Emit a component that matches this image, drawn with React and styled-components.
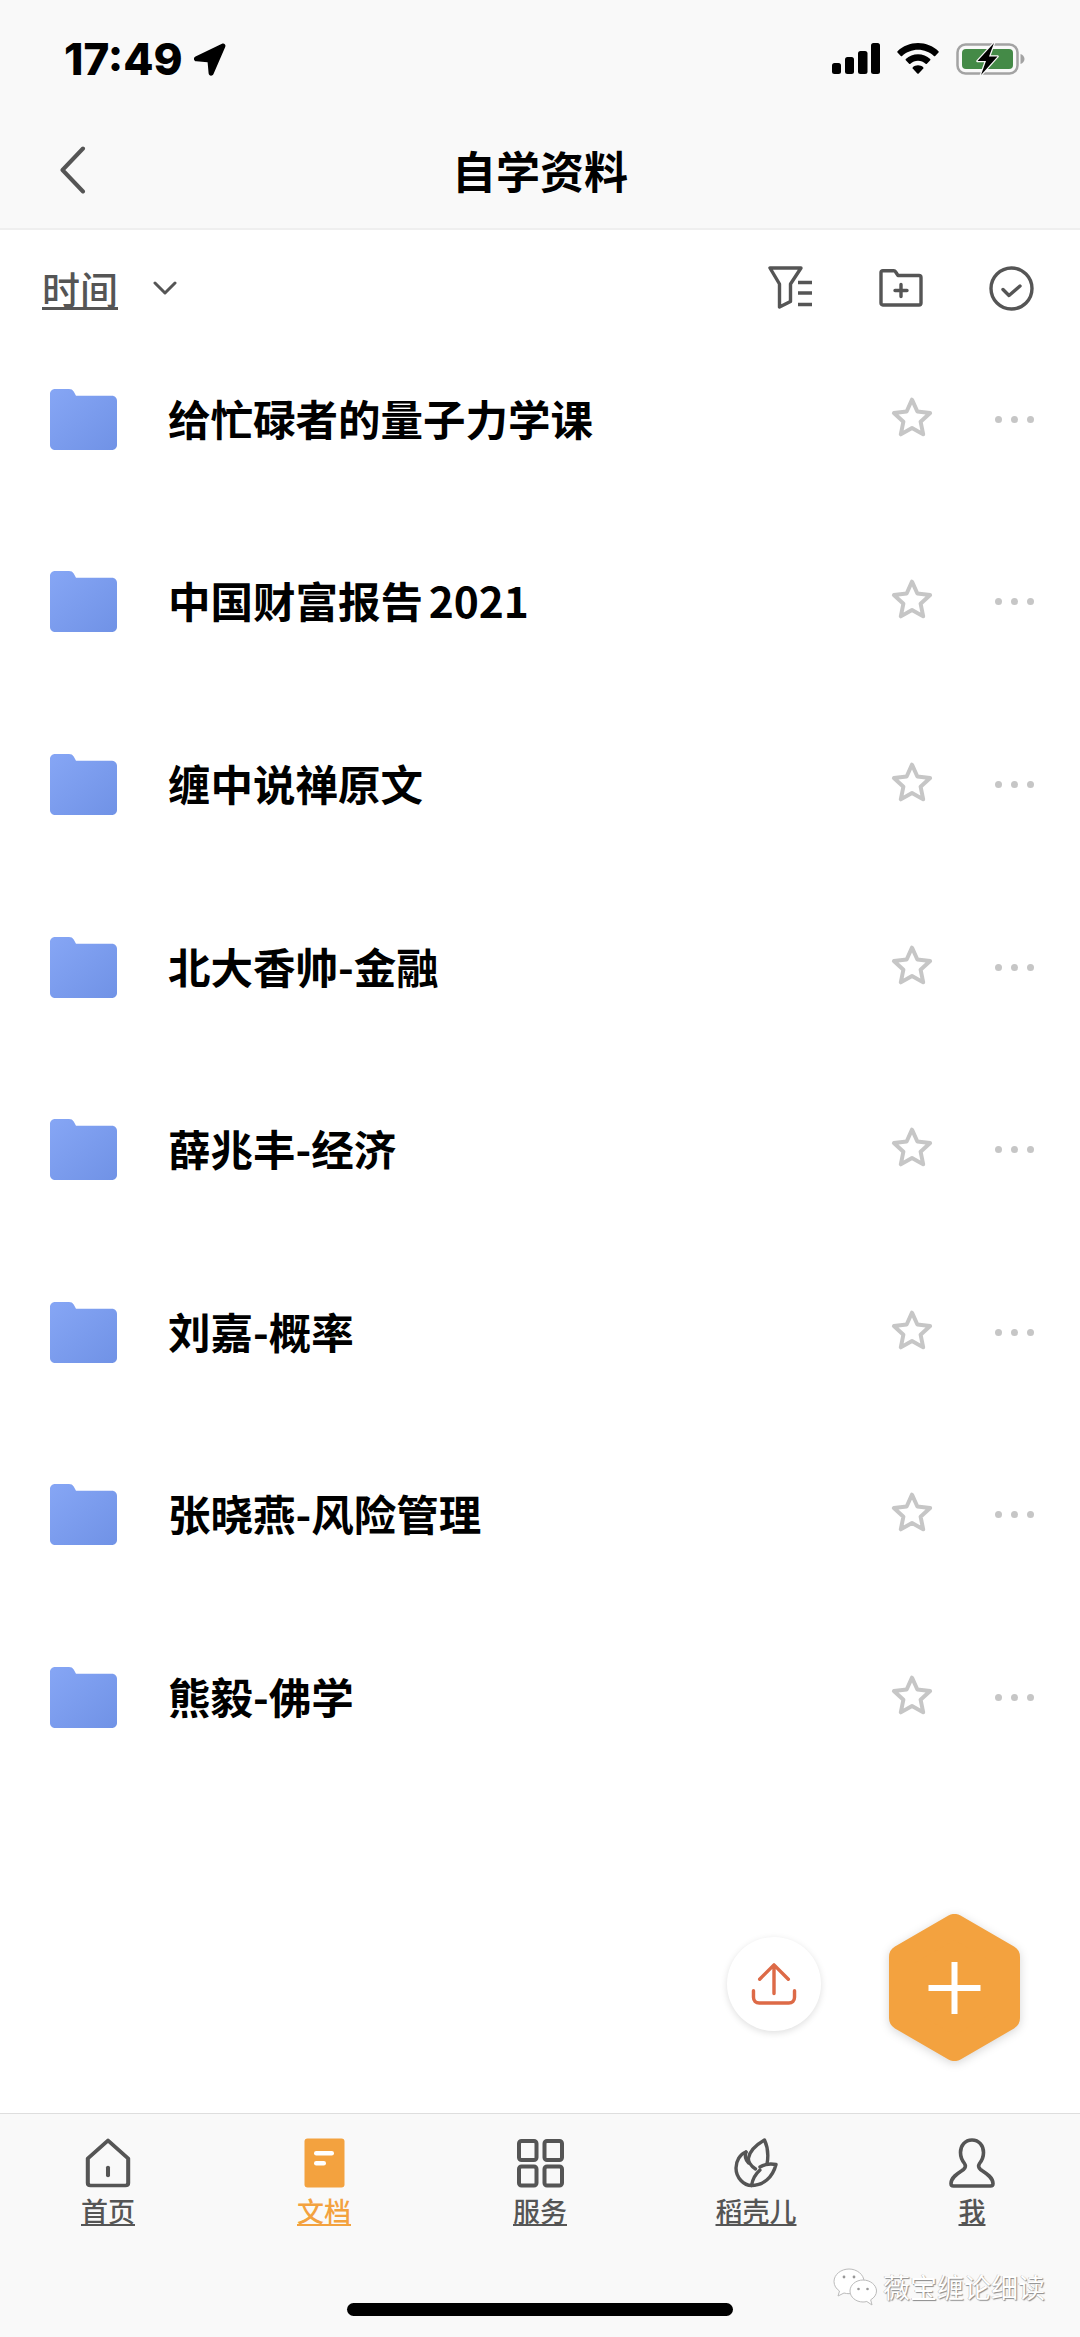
import React from "react";
import styled, { createGlobalStyle } from "styled-components";

const GlobalStyle = createGlobalStyle`
  html, body { margin: 0; padding: 0; background: #fff; }
  body { font-family: "Noto Sans CJK SC", "Noto Sans", sans-serif; }
`;

const Page = styled.div`
  position: relative;
  width: 1080px;
  height: 2337px;
  display: flex;
  flex-direction: column;
  overflow: hidden;
  background: #fff;
`;
const Header = styled.header`
  height: 228px;
  background: #f9f9f9;
  border-bottom: 2px solid #efefef;
  display: flex;
  flex-direction: column;
`;
const StatusBar = styled.div`
  height: 118px;
  display: flex;
  align-items: flex-start;
  padding: 43px 54px 0 64px;
  box-sizing: border-box;
`;
const Time = styled.span`
  font-family: Inter, "Liberation Sans", sans-serif;
  font-weight: 800;
  font-size: 44px;
  line-height: 33px;
  letter-spacing: 0;
  color: #000;
`;
const LocationIcon = styled.svg`
  margin-left: 9px;
`;
const StatusIcons = styled.div`
  margin-left: auto;
  display: flex;
  gap: 17px;
`;
const NavBar = styled.div`
  flex: 1;
  display: flex;
  align-items: center;
  position: relative;
  padding: 0 0 6px 60px;
`;
const NavTitle = styled.h1`
  flex: 1;
  margin: 0 0 0 -26px;
  padding-right: 60px;
  text-align: center;
  font-size: 44px;
  line-height: 60px;
  font-weight: 700;
  color: #000;
`;
const Toolbar = styled.div`
  height: 98px;
  display: flex;
  align-items: center;
  padding: 18px 46px 0 42px;
  box-sizing: border-box;
`;
const SortLabel = styled.span`
  font-size: 38px;
  line-height: 50px;
  font-weight: 500;
  color: #555;
  text-decoration: underline;
  text-decoration-thickness: 3px;
  text-underline-offset: 3px;
`;
const SortArrow = styled.svg`
  margin-left: 35px;
`;
const ToolIcons = styled.div`
  margin-left: auto;
  display: flex;
  align-items: center;
  gap: 66px;
`;
const FileList = styled.ul`
  list-style: none;
  margin: 0;
  padding: 0;
`;
const FileRow = styled.li`
  height: 182.6px;
  display: flex;
  align-items: center;
  padding: 0 46px 0 50px;
  box-sizing: border-box;
`;
const FileName = styled.span`
  margin: -3px 0 0 51px;
  font-size: 42.5px;
  line-height: 60px;
  font-weight: 700;
  word-spacing: -4px;
  color: #000;
`;
const StarIcon = styled.svg`
  margin-left: auto;
  margin-top: -4px;
`;
const MoreDots = styled.div`
  margin-left: 61px;
  display: flex;
  gap: 9px;
`;
const Dot = styled.i`
  width: 7px;
  height: 7px;
  border-radius: 50%;
  background: #c6c6c6;
`;
const UploadButton = styled.div`
  position: absolute;
  left: 727px;
  top: 1937px;
  width: 94px;
  height: 94px;
  border-radius: 50%;
  background: #fff;
  box-shadow: 0 2px 7px rgba(0, 0, 0, 0.13);
  display: flex;
  align-items: center;
  justify-content: center;
`;
const AddButton = styled.svg`
  position: absolute;
  left: 889px;
  top: 1914px;
  overflow: visible;
  filter: drop-shadow(0 2px 5px rgba(0, 0, 0, 0.16));
`;
const TabBar = styled.nav`
  margin-top: auto;
  height: 224px;
  background: #f9f9f9;
  border-top: 1px solid #dedede;
  padding-top: 24px;
  box-sizing: border-box;
  display: grid;
  grid-template-columns: repeat(5, 1fr);
  align-items: start;
`;
const Tab = styled.div`
  display: flex;
  flex-direction: column;
  align-items: center;
  white-space: nowrap;
`;
const TabIconBox = styled.div`
  height: 50px;
  display: flex;
  align-items: center;
  justify-content: center;
`;
const TabLabel = styled.span`
  margin-top: 4px;
  font-size: 27px;
  line-height: 38px;
  font-weight: 500;
  color: ${(p) => (p.$active ? "#f3a23f" : "#555")};
  text-decoration: underline;
  text-decoration-thickness: 2px;
  text-underline-offset: 2px;
`;
const HomeIndicator = styled.div`
  position: absolute;
  left: 347px;
  top: 2303px;
  width: 386px;
  height: 13px;
  border-radius: 7px;
  background: #000;
`;
const Watermark = styled.div`
  position: absolute;
  left: 833px;
  top: 2267px;
  display: flex;
  align-items: center;
  gap: 6px;
`;
const WatermarkText = styled.span`
  font-size: 27px;
  line-height: 40px;
  color: #fff;
  text-shadow: 1px 1px 1px #8a8a8a, -0.5px -0.5px 0.5px #b5b5b5;
`;

const files = [
  "给忙碌者的量子力学课",
  "中国财富报告 2021",
  "缠中说禅原文",
  "北大香帅-金融",
  "薛兆丰-经济",
  "刘嘉-概率",
  "张晓燕-风险管理",
  "熊毅-佛学",
];

function FolderIcon({ id }) {
  return (
    <svg width="67" height="61" viewBox="0 0 67 61">
      <defs>
        <linearGradient id={id} x1="0" y1="0" x2="1" y2="1">
          <stop offset="0" stopColor="#86a6f5" />
          <stop offset="1" stopColor="#7092e6" />
        </linearGradient>
      </defs>
      <path
        d="M5 0H19c2.2 0 3.6.8 4.7 2.6L26 6.800H62c2.800 0 5 2.200 5 5V56c0 2.800-2.200 5-5 5H5c-2.800 0-5-2.200-5-5V5c0-2.800 2.200-5 5-5Z"
        fill={`url(#${id})`}
      />
    </svg>
  );
}

function Star() {
  return (
    <StarIcon width="44" height="43" viewBox="0 0 42 41">
      <path
        d="M21 3.500l5.100 11.300 12.200 1.400-9.100 8.300 2.500 12.100L21 30.500 10.300 36.600l2.500-12.100-9.100-8.300 12.200-1.400Z"
        fill="none"
        stroke="#c6c6c6"
        strokeWidth="3.800"
        strokeLinejoin="round"
      />
    </StarIcon>
  );
}

const tabs = [
  {
    label: "首页",
    icon: (
      <svg width="46" height="50" viewBox="0 0 41 50" preserveAspectRatio="none" fill="none" stroke="#555" strokeWidth="3.600" strokeLinejoin="round" strokeLinecap="round">
        <path d="M20.500 2.500 2.500 20.500V45c0 1.500 1 2.500 2.500 2.500h31c1.500 0 2.500-1 2.500-2.500V20.500Z" />
        <path d="M20.500 29.500v8" />
      </svg>
    ),
  },
  {
    label: "文档",
    active: true,
    icon: (
      <svg width="41" height="50" viewBox="0 0 41 50">
        <rect x="0.500" y="0.500" width="40" height="49" rx="3" fill="#f3a23f" />
        <rect x="10" y="13" width="20" height="4.500" rx="2.200" fill="#fff" />
        <rect x="10" y="23" width="12" height="4.500" rx="2.200" fill="#fff" />
      </svg>
    ),
  },
  {
    label: "服务",
    icon: (
      <svg width="47" height="49" viewBox="0 0 47 49" fill="none" stroke="#555" strokeWidth="4">
        <rect x="2" y="2" width="17.500" height="19" rx="2.500" />
        <rect x="27.500" y="2" width="17.500" height="19" rx="2.500" />
        <rect x="2" y="27.500" width="17.500" height="19" rx="2.500" />
        <rect x="27.500" y="27.500" width="17.500" height="19" rx="2.500" />
      </svg>
    ),
  },
  {
    label: "稻壳儿",
    icon: (
      <svg width="44" height="50" viewBox="0 0 44 50" fill="none" stroke="#555" strokeWidth="3.400" strokeLinejoin="round" strokeLinecap="round">
        <path d="M12 14C6 16 2 23 2 30c0 10 8 17.500 15.500 17.500 11.500 0 21-7.500 24.500-21-5.500-1-12 0-16 2.500" />
        <path d="M33 26c1.500-8 .5-17.500-2.500-24C21 7.500 15.500 14.500 14.500 20c-.5 3 2 8 7 11" />
        <path d="M12 14c-1.500 4-1 7 2.500 11" />
        <path d="M17.500 47.500c1-6 4.500-12 8.500-15.500" />
      </svg>
    ),
  },
  {
    label: "我",
    icon: (
      <svg width="46" height="50" viewBox="0 0 46 50" fill="none" stroke="#555" strokeWidth="3.600" strokeLinejoin="round">
        <path d="M23 2c-7 0-11.500 5.500-11.500 12.500 0 5 2 8.500 4 11 1.500 2 1 4.500-1 6C10 34.500 2 39 2 45.500c0 1.500 1 2.500 2.500 2.500h37c1.500 0 2.500-1 2.500-2.500 0-6.500-8-11-12.500-14-2-1.500-2.500-4-1-6 2-2.500 4-6 4-11C34.500 7.500 30 2 23 2Z" />
      </svg>
    ),
  },
];

export default function App() {
  return (
    <Page>
      <GlobalStyle />
      <Header>
        <StatusBar>
          <Time>17:49</Time>
          <LocationIcon width="36" height="34" viewBox="0 0 34 34">
            <path d="M2.500 13.500 29 .8c2.200-1 4.200 1 3.200 3.200L20.500 31c-1.100 2.600-4.700 2.200-4.900-.7l-1-11-11.200-1c-2.800-.2-3.400-3.500-.9-4.800Z" fill="#000" />
          </LocationIcon>
          <StatusIcons>
            <svg width="48" height="31" viewBox="0 0 48 31" fill="#000">
              <rect x="0" y="20" width="9" height="11" rx="2.500" />
              <rect x="13" y="14" width="9" height="17" rx="2.500" />
              <rect x="26" y="8" width="9.500" height="23" rx="2.500" />
              <rect x="39" y="0" width="9" height="31" rx="2.500" />
            </svg>
            <svg width="42" height="31" viewBox="0 0 42 31" fill="#000">
              <path d="M21 0c7.800 0 15 3 20.500 8.200.4.400.4.900 0 1.300l-3.300 3.400c-.4.400-.9.400-1.300 0C32.600 9 27 6.700 21 6.700S9.400 9 5.100 12.900c-.4.400-.9.400-1.300 0L.5 9.500c-.4-.4-.4-.9 0-1.300C6 3 13.200 0 21 0Z" />
              <path d="M21 11.200c4.600 0 8.900 1.700 12.200 4.800.4.400.4.900 0 1.300l-3.300 3.400c-.4.400-.9.400-1.300 0-2.100-1.900-4.700-2.900-7.600-2.900s-5.500 1-7.600 2.900c-.4.400-.9.400-1.300 0l-3.300-3.400c-.4-.4-.4-.9 0-1.300 3.300-3.100 7.600-4.800 12.200-4.800Z" />
              <path d="M21 22.300c2 0 3.800.7 5.200 1.900.4.400.4.900.1 1.300l-4.600 5c-.4.400-1 .4-1.400 0l-4.600-5c-.3-.4-.3-.9.100-1.300 1.400-1.200 3.200-1.900 5.200-1.900Z" />
            </svg>
            <svg width="70" height="34" viewBox="0 0 70 34" style={{ marginTop: -1 }}>
              <rect x="1.500" y="2.500" width="60" height="29" rx="8" fill="none" stroke="#a3a3a3" strokeWidth="2.500" />
              <rect x="6" y="7" width="51" height="20" rx="4" fill="#448a47" />
              <path d="M64.500 12c2.500.8 4 2.800 4 5s-1.500 4.200-4 5Z" fill="#a3a3a3" />
              <path d="M38 1 21.500 19H30l-5 14L41.500 14.500H33Z" fill="#000" stroke="#f9f9f9" strokeWidth="2.500" strokeLinejoin="round" paintOrder="stroke" />
            </svg>
          </StatusIcons>
        </StatusBar>
        <NavBar>
          <svg width="26" height="48" viewBox="0 0 26 48" fill="none" stroke="#555" strokeWidth="4" strokeLinecap="round" strokeLinejoin="round">
            <path d="M23 2.500 2.500 24 23 45.500" />
          </svg>
          <NavTitle>自学资料</NavTitle>
        </NavBar>
      </Header>

      <Toolbar>
        <SortLabel>时间</SortLabel>
        <SortArrow width="24" height="16" viewBox="0 0 24 16" fill="none" stroke="#555" strokeWidth="3" strokeLinecap="round" strokeLinejoin="round">
          <path d="M2 3l10 10L22 3" />
        </SortArrow>
        <ToolIcons>
          <svg width="45" height="44" viewBox="0 0 45 44" fill="none" stroke="#555" strokeWidth="3.400" strokeLinejoin="round">
            <path d="M2 2h31L22.500 18v17.500L11.500 41V18Z" />
            <path d="M30 16.500h14M30 27h14M30 38.500h14" />
          </svg>
          <svg width="44" height="38" viewBox="0 0 44 38" fill="none" stroke="#555" strokeWidth="3.400" strokeLinejoin="round" strokeLinecap="round">
            <path d="M2 3.500c0-1 .7-1.800 1.800-1.800h11c.8 0 1.300.3 1.700 1l2.500 3.800h21c1.200 0 2 .8 2 2V34c0 1.200-.8 2-2 2H3.800C2.700 36 2 35.200 2 34Z" />
            <path d="M22 15.500v12M16 21.500h12" />
          </svg>
          <svg width="45" height="45" viewBox="0 0 45 45" fill="none" stroke="#555" strokeWidth="3.400" strokeLinecap="round" strokeLinejoin="round">
            <circle cx="22.500" cy="22.500" r="20.500" />
            <path d="M14 23.500l6 6 11-9.500" />
          </svg>
        </ToolIcons>
      </Toolbar>

      <FileList>
        {files.map((name, i) => (
          <FileRow key={name}>
            <FolderIcon id={`folder-${i}`} />
            <FileName>{name}</FileName>
            <Star />
            <MoreDots>
              <Dot />
              <Dot />
              <Dot />
            </MoreDots>
          </FileRow>
        ))}
      </FileList>

      <UploadButton>
        <svg width="46" height="42" viewBox="0 0 48 44" fill="none" stroke="#dd6a47" strokeWidth="3.600" strokeLinecap="round" strokeLinejoin="round">
          <path d="M24 2v30M9 17 24 2l15 15" />
          <path d="M2.500 29v7c0 3.500 2.500 6 6 6h31c3.500 0 6-2.500 6-6v-7" />
        </svg>
      </UploadButton>
      <AddButton width="131" height="147" viewBox="0 0 131 147">
        <polygon points="65.500,12 119,43 119,104 65.500,135 12,104 12,43" fill="#f3a23f" stroke="#f3a23f" strokeWidth="24" strokeLinejoin="round" />
        <rect x="39.500" y="71" width="52" height="6" fill="#fff" />
        <rect x="62.500" y="48" width="6" height="52" fill="#fff" />
      </AddButton>

      <TabBar>
        {tabs.map((t) => (
          <Tab key={t.label}>
            <TabIconBox>{t.icon}</TabIconBox>
            <TabLabel $active={t.active}>{t.label}</TabLabel>
          </Tab>
        ))}
      </TabBar>

      <HomeIndicator />
      <Watermark>
        <svg width="44" height="38" viewBox="0 0 44 38">
          <path d="M16 1C8 1 1 6.500 1 13.500c0 4 2.200 7.300 5.500 9.500L5 28l6-3c1.600.4 3.200.7 5 .7 8 0 15-5.400 15-12.200S24 1 16 1Z" fill="#fff" stroke="#bbb" strokeWidth="1" />
          <path d="M30 12c-7.200 0-13 5-13 11s5.800 11 13 11c1.300 0 2.600-.2 3.800-.5L39 37l-1.300-5.200c3.500-2 5.800-5.200 5.800-8.800 0-6-6.300-11-13.500-11Z" fill="#fff" stroke="#bbb" strokeWidth="1" />
          <circle cx="11" cy="9" r="1.400" fill="#999" />
          <circle cx="21" cy="9" r="1.400" fill="#999" />
          <circle cx="25.500" cy="21" r="1.300" fill="#999" />
          <circle cx="34.500" cy="21" r="1.300" fill="#999" />
        </svg>
        <WatermarkText>薇宝缠论细读</WatermarkText>
      </Watermark>
    </Page>
  );
}
